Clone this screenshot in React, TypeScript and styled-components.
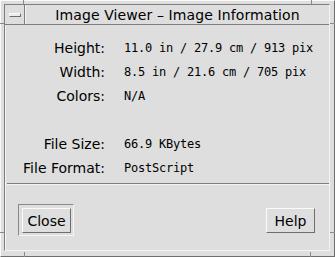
import React from 'react';
import styled, { createGlobalStyle } from 'styled-components';

const GlobalStyle = createGlobalStyle`
    html, body {
        margin: 0;
        padding: 0;
        background: #dedede;
    }
`;

const Window = styled.div`
    position: relative;
    width: 335px;
    height: 257px;
    box-sizing: border-box;
    background: #dedede;
    border: 1px solid;
    border-color: #fafafa #6e6e6e #6e6e6e #fafafa;
    padding: 3px 4px 5px 3px;
    font-family: "DejaVu Sans", sans-serif;
    color: #000;
`;

const Tick = styled.span<{ $side: 'top' | 'bottom' | 'left' | 'right'; $at: string }>`
    position: absolute;
    background: #8a8a8a;
    ${p => p.$side === 'top' && `top: -1px; left: ${p.$at}; width: 1px; height: 4px;`}
    ${p => p.$side === 'bottom' && `bottom: -1px; left: ${p.$at}; width: 1px; height: 5px;`}
    ${p => p.$side === 'left' && `left: -1px; top: ${p.$at}; width: 4px; height: 1px;`}
    ${p => p.$side === 'right' && `right: -1px; top: ${p.$at}; width: 5px; height: 1px;`}
`;

const Inner = styled.div`
    height: 100%;
    box-sizing: border-box;
    border: 1px solid;
    border-color: #7e7e7e #f4f4f4 #f4f4f4 #7e7e7e;
    display: flex;
    flex-direction: column;
`;

const TitleBar = styled.div`
    display: flex;
    height: 19px;
    border-bottom: 1px solid #7e7e7e;
`;

const MenuButton = styled.div`
    width: 19px;
    border-right: 1px solid #7e7e7e;
    display: flex;
    align-items: center;
    justify-content: center;
`;

const MenuBar = styled.div`
    width: 10px;
    height: 2px;
    background: #ececec;
    border: 1px solid;
    border-color: #fafafa #6e6e6e #6e6e6e #fafafa;
`;

const Title = styled.div`
    flex: 1;
    display: flex;
    align-items: center;
    justify-content: center;
    font-size: 14px;
    letter-spacing: 0.1px;
    padding-top: 1px;
    border-left: 1px solid #f4f4f4;
`;

const Body = styled.div`
    flex: 1;
    border-left: 1px solid #f4f4f4;
    display: flex;
    flex-direction: column;
`;

const InfoGrid = styled.div`
    display: grid;
    grid-template-columns: 99px auto;
    column-gap: 19px;
    grid-auto-rows: 24px;
    padding-top: 11px;
    height: 158px;
    box-sizing: border-box;
`;

const Label = styled.div`
    font-size: 14px;
    text-align: right;
    line-height: 24px;
`;

const Value = styled.div`
    font-family: "DejaVu Sans Mono", monospace;
    font-size: 12px;
    letter-spacing: -0.22px;
    line-height: 24px;
`;

const Separator = styled.div`
    height: 1px;
    background: #7e7e7e;
    border-bottom: 1px solid #f4f4f4;
    margin-left: 1px;
`;

const ButtonBar = styled.div`
    flex: 1;
    display: flex;
    align-items: center;
    justify-content: space-between;
    padding: 5px 11px 0 12px;
`;

const DefaultRing = styled.div<{ $active?: boolean }>`
    padding: 3px 2px 2px 3px;
    border: 1px solid;
    border-color: ${p => (p.$active ? '#8a8a8a #f4f4f4 #f4f4f4 #8a8a8a' : 'transparent')};
`;

const Button = styled.button`
    width: 49px;
    height: 25px;
    box-sizing: border-box;
    margin: 0;
    padding: 0;
    background: #dedede;
    border: 1px solid;
    border-color: #fafafa #6e6e6e #6e6e6e #fafafa;
    font-family: "DejaVu Sans", sans-serif;
    font-size: 14px;
    color: #000;
`;

const rows: [string, string][] = [
    ['Height:', '11.0 in / 27.9 cm / 913 pix'],
    ['Width:', '8.5 in / 21.6 cm / 705 pix'],
    ['Colors:', 'N/A'],
    ['', ''],
    ['File Size:', '66.9 KBytes'],
    ['File Format:', 'PostScript'],
];

export default function App() {
    return (
        <>
            <GlobalStyle />
            <Window>
                <Tick $side="top" $at="22px" />
                <Tick $side="top" $at="310px" />
                <Tick $side="left" $at="22px" />
                <Tick $side="left" $at="231px" />
                <Tick $side="right" $at="22px" />
                <Tick $side="right" $at="231px" />
                <Tick $side="bottom" $at="23px" />
                <Tick $side="bottom" $at="309px" />
                <Inner>
                    <TitleBar>
                        <MenuButton>
                            <MenuBar />
                        </MenuButton>
                        <Title>Image Viewer – Image Information</Title>
                    </TitleBar>
                    <Body>
                        <InfoGrid>
                            {rows.map(([label, value], i) => (
                                <React.Fragment key={i}>
                                    <Label>{label}</Label>
                                    <Value>{value}</Value>
                                </React.Fragment>
                            ))}
                        </InfoGrid>
                        <Separator />
                        <ButtonBar>
                            <DefaultRing $active>
                                <Button>Close</Button>
                            </DefaultRing>
                            <DefaultRing>
                                <Button>Help</Button>
                            </DefaultRing>
                        </ButtonBar>
                    </Body>
                </Inner>
            </Window>
        </>
    );
}
